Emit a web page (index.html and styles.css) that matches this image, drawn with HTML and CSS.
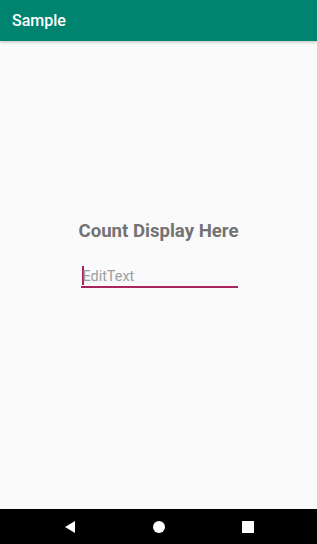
FILE: index.html
```html
<!DOCTYPE html>
<html lang="en">
<head>
  <meta charset="UTF-8" />
  <meta name="viewport" content="width=device-width, initial-scale=1" />
  <title>Sample</title>
  <link rel="stylesheet" href="styles.css">
</head>
<body>
  <header class="app-bar">
    <h1>Sample</h1>
  </header>

  <main class="content">
    <h2 class="count">Count Display Here</h2>
    <div class="edit-field">
      <span class="cursor"></span>
      <span class="hint">EditText</span>
    </div>
  </main>

  <nav class="nav-bar">
    <svg class="nav-icon" viewBox="0 0 14 14" width="14" height="14">
      <polygon points="12,1 12,13 2,7" fill="#fff" />
    </svg>
    <svg class="nav-icon" viewBox="0 0 14 14" width="14" height="14">
      <circle cx="7" cy="7" r="6" fill="#fff" />
    </svg>
    <svg class="nav-icon" viewBox="0 0 14 14" width="14" height="14">
      <rect x="1" y="1" width="12" height="12" fill="#fff" />
    </svg>
  </nav>
</body>
</html>
```

FILE: styles.css
```css
html, body {
  height: 100%;
}

body {
  margin: 0;
  font-family: Roboto, "Noto Sans", sans-serif;
  background-color: #fafafa;
  display: flex;
  flex-direction: column;
}

.app-bar {
  height: 41px;
  background-color: #00836f;
  box-shadow: 0 1px 3px rgba(0, 0, 0, 0.25);
  display: flex;
  align-items: center;
  padding-left: 12px;
  position: relative;
  z-index: 1;
}

.app-bar h1 {
  margin: 0;
  color: #fff;
  font-size: 16px;
  font-weight: 500;
}

.content {
  flex: 1;
  display: flex;
  flex-direction: column;
  align-items: center;
  padding-top: 178px;
}

.count {
  margin: 0;
  font-size: 18.6px;
  font-weight: 700;
  color: #737373;
  line-height: 24px;
}

.edit-field {
  margin-top: 21px;
  width: 157px;
  margin-left: 1px;
  height: 22px;
  border-bottom: 2px solid #a8245f;
  display: flex;
  align-items: center;
}

.cursor {
  width: 2px;
  height: 19px;
  background-color: #a8245f;
  margin-left: 1px;
}

.hint {
  font-size: 14.4px;
  color: #9e9e9e;
  margin-left: -1px;
  padding-top: 3px;
}

.nav-bar {
  height: 35px;
  background-color: #000;
  display: flex;
  justify-content: center;
  gap: 75px;
  align-items: center;
}

.nav-icon {
  display: block;
}
```
